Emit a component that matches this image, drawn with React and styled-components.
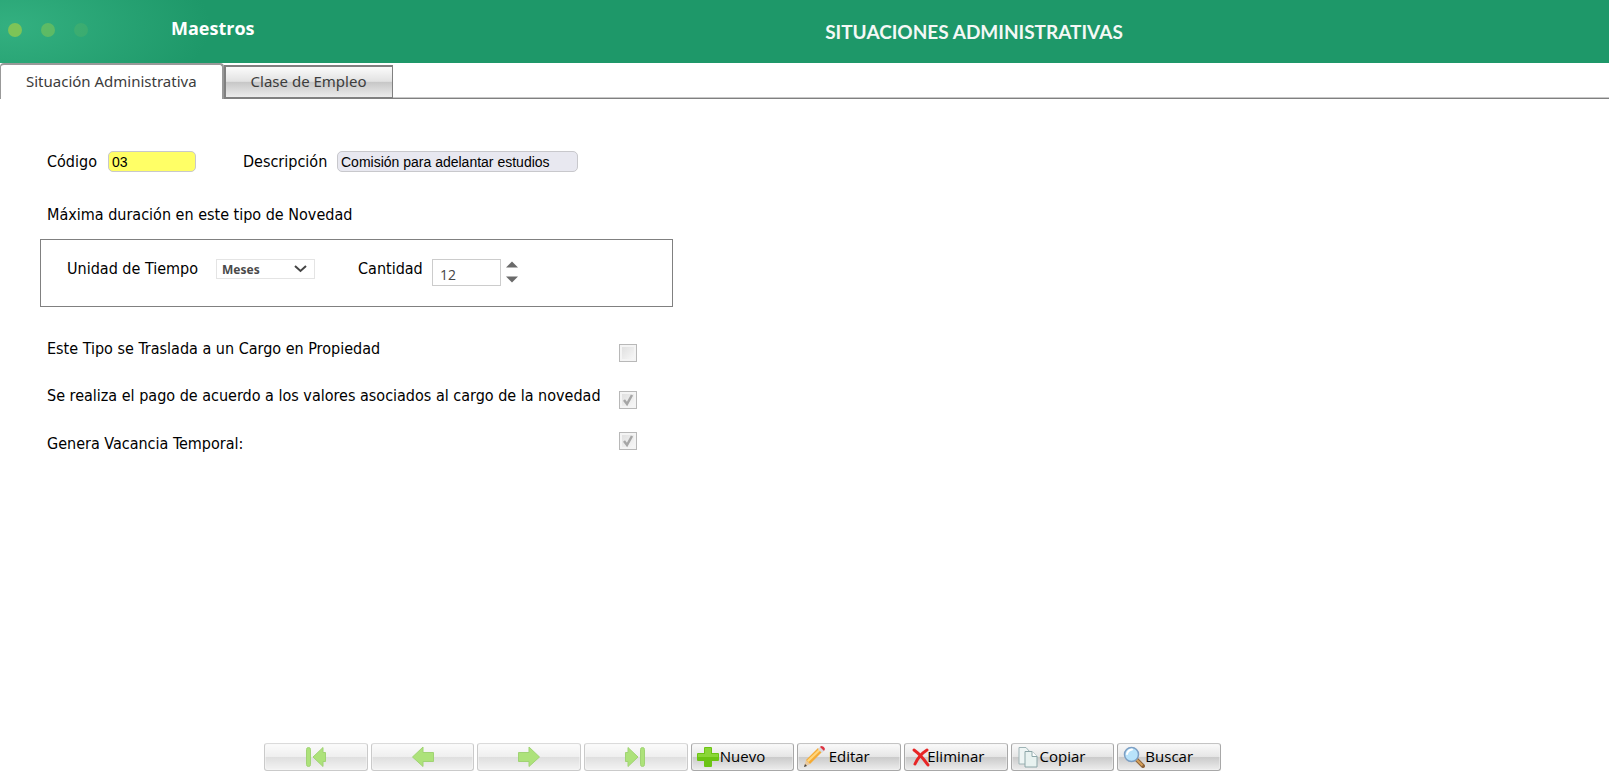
import { useState } from 'react';
import styled, { createGlobalStyle, css } from 'styled-components';

const GlobalStyle = createGlobalStyle`
	* {
		box-sizing: border-box;
	}

	body {
		margin: 0;
		background: #fff;
		color: #000;
		font-family: 'DejaVu Sans Condensed', 'Noto Sans', sans-serif;
		font-size: 16px;
		line-height: 20px;
	}
`;

const Page = styled.div`
	display: flex;
	flex-direction: column;
	min-height: 100vh;
`;

const Header = styled.header`
	display: flex;
	align-items: center;
	height: 63px;
	padding: 0 8px;
	color: #fff;
	background: radial-gradient(ellipse 200px 90px at 10px 26px, #33b080, #1e9869) #1e9869;
`;

const Dots = styled.div`
	display: flex;
	gap: 19px;
	width: 163px;
	margin-bottom: 4px;
`;

const Dot = styled.span`
	width: 14px;
	height: 14px;
	border-radius: 50%;
	background: #7dc457;
	opacity: ${({ $opacity }) => $opacity};
`;

const Brand = styled.strong`
	width: 366px;
	margin-bottom: 8px;
	font-family: 'Open Sans', sans-serif;
	font-size: 18px;
	line-height: 24px;
`;

const Title = styled.h1`
	flex: 1;
	margin: 0;
	padding-right: 190px;
	font-family: Lato, sans-serif;
	font-size: 19px;
	line-height: 24px;
	color: #f4f8f6;
	text-align: center;
`;

const TabList = styled.div`
	display: flex;
	align-items: flex-end;
	height: 36px;
	background: linear-gradient(#c8c8c8, #c8c8c8) 0 34px / 100% 1px no-repeat,
		linear-gradient(#808080, #808080) 0 35px / 100% 1px no-repeat;
`;

const Tab = styled.button`
	height: 34px;
	padding: 0 25px 3px;
	border: 1px solid #808080;
	border-width: 2px 1px 2px 2px;
	background: linear-gradient(#fbfbfb, #e2e2e2 48%, #c6c6c6 50%, #ececec);
	color: #3c3c3c;
	font-family: 'Noto Sans', sans-serif;
	font-size: 15px;

	${({ $active }) =>
		$active &&
		css`
			height: 36px;
			border: 2px solid #999;
			border-bottom: 0;
			border-left-width: 1px;
			border-radius: 4px 4px 0 0;
			background: #fff;
		`}
`;

const Form = styled.form`
	padding: 52px 40px 0;
`;

const FieldRow = styled.div`
	display: grid;
	grid-template-columns: 61px 135px 94px 241px;
	align-items: center;
	padding-left: 7px;
`;

const TextInput = styled.input`
	width: ${({ $width }) => $width};
	height: 21px;
	padding: 0 3px;
	border: 1px solid #c8c8cc;
	border-radius: 5px;
	background: ${({ $fill }) => $fill};
	color: #000;
	font-family: 'Liberation Sans', sans-serif;
	font-size: 14px;
`;

const Group = styled.fieldset`
	margin: 0;
	padding: 0;
	border: 0;
`;

const GroupTitle = styled.legend`
	padding: 33px 7px 14px;
`;

const GroupBox = styled.div`
	display: grid;
	grid-template-columns: 149px 142px 74px auto;
	justify-content: start;
	align-items: start;
	max-width: 633px;
	padding: 19px 26px 20px;
	border: 1px solid #808080;
`;

const SelectBox = styled.div`
	display: grid;
	width: 99px;
	align-items: center;

	& > * {
		grid-area: 1 / 1;
	}

	svg {
		justify-self: end;
		margin-right: 8px;
		pointer-events: none;
	}
`;

const Select = styled.select`
	appearance: none;
	height: 20px;
	padding: 0 5px;
	border: 1px solid #e4e4e4;
	border-radius: 0;
	background: #fff;
	color: #4a4a4a;
	font-family: 'Noto Sans', sans-serif;
	font-size: 12px;
	font-weight: 700;
`;

const Spinner = styled.div`
	display: flex;
	gap: 5px;
`;

const NumberInput = styled.input`
	width: 69px;
	height: 27px;
	padding: 3px 7px 0;
	border: 1px solid #ccc;
	color: #444;
	font-family: 'Open Sans', sans-serif;
	font-size: 14px;
`;

const SpinButtons = styled.div`
	display: flex;
	flex-direction: column;
	gap: 8px;
	padding-top: 2px;
`;

const SpinButton = styled.button`
	display: flex;
	padding: 0;
	border: 0;
	background: none;
`;

const CheckList = styled.div`
	display: grid;
	gap: 23px;
	padding: 31px 0 0 7px;
`;

const CheckRow = styled.div`
	display: grid;
	grid-template-columns: 572px 18px;
	align-items: ${({ $raised }) => ($raised ? 'start' : 'end')};
	height: 24px;

	label {
		align-self: start;
		padding-top: ${({ $raised }) => ($raised ? '2px' : '1px')};
	}
`;

const CheckMark = styled.span`
	display: grid;

	& > * {
		grid-area: 1 / 1;
	}

	svg {
		pointer-events: none;
	}
`;

const Checkbox = styled.input`
	appearance: none;
	width: 18px;
	height: 18px;
	margin: 0;
	border: 1px solid #b8b8b8;
	background: linear-gradient(135deg, #dcdcdc, #fafafa);
	box-shadow: inset 0 0 0 2px #f4f4f4;
`;

const Toolbar = styled.footer`
	display: flex;
	gap: 3px;
	max-width: 1221px;
	margin-top: auto;
	padding: 0 0 3px 264px;
`;

const ToolButton = styled.button`
	display: grid;
	flex: 1;
	align-items: center;
	justify-items: center;
	height: 28px;
	padding: 0 5px;
	border: 1px solid #a8a8a8;
	border-top-color: #c4c4c4;
	border-radius: 3px;
	background: linear-gradient(#fafafa, #e6e6e6 48%, #cbcbcb 52%, #ededed);
	box-shadow: inset 0 0 0 1px #f4f4f480;
	color: #000;
	font-family: 'Open Sans', sans-serif;
	font-size: 15px;
	opacity: ${({ disabled }) => (disabled ? 0.6 : 1)};

	& > * {
		grid-area: 1 / 1;
	}

	svg {
		justify-self: ${({ $iconOnly }) => ($iconOnly ? 'center' : 'start')};
	}

	span {
		padding-bottom: 2px;
	}
`;

const Icon = ({ children, size = 22 }) => (
	<svg width={size} height={size} viewBox="0 0 22 22" fill="none" aria-hidden="true">
		{children}
	</svg>
);

const green = { fill: '#78d022', stroke: '#62b719', strokeLinejoin: 'round' };

const icons = {
	first: (
		<Icon>
			<rect x="1.5" y="1.5" width="4" height="19" rx="2" {...green} />
			<path d="M8 11 18 1.500v5h2.500v9H18v5z" {...green} />
		</Icon>
	),
	prev: (
		<Icon>
			<path d="M.5 11 11 1v5.500h10.500v9H11V20.500z" {...green} />
		</Icon>
	),
	next: (
		<Icon>
			<path d="M21.500 11 11 1v5.500H.5v9H11V20.500z" {...green} />
		</Icon>
	),
	last: (
		<Icon>
			<rect x="15.500" y="1.5" width="4" height="19" rx="2" {...green} />
			<path d="M13 11 3 1.500v5H.5v9H3v5z" {...green} />
		</Icon>
	),
	add: (
		<Icon>
			<path
				d="M8 1h6q1 0 1 1v5h6q1 0 1 1v6q0 1-1 1h-6v5q0 1-1 1H8q-1 0-1-1v-5H1q-1 0-1-1V8q0-1 1-1h6V2q0-1 1-1z"
				fill="#6cc414"
			/>
			<path d="M8 2h6v6h7v3H1V8h7z" fill="#8ad638" />
		</Icon>
	),
	edit: (
		<Icon>
			<path d="m1 21 2-7 4 4z" fill="#e8c9a0" />
			<path d="m1 21 1-3 2 2z" fill="#444" />
			<path d="M3 14 15 2l4 4L7 18z" fill="#f5ab35" />
			<path d="M4 14.500 16 3l1.500 1.500L5.500 16z" fill="#ffd67c" />
			<path d="m15 3 2-2 4 4-2 2z" fill="#d9dbe0" />
			<path d="m17 1 1-1q3 0 4 3l-1 2z" fill="#dd3340" />
		</Icon>
	),
	remove: (
		<Icon>
			<path
				d="M4 4q7 5 14 15M17 4Q9 9 5 18"
				stroke="#e72525"
				strokeWidth="3"
				strokeLinecap="round"
			/>
		</Icon>
	),
	copy: (
		<Icon>
			<path d="M2 1.500h7L13 6v12H2z" fill="#eef5f4" stroke="#9fb4b6" />
			<path d="M8 5.500h7l5 5v10.500H8z" fill="#e8f2f0" stroke="#8ca6a8" />
			<path d="M15 5.500v5h5" fill="#fff" stroke="#8ca6a8" />
		</Icon>
	),
	search: (
		<Icon>
			<path d="m13 13 7 7" stroke="#8c6239" strokeWidth="4" strokeLinecap="round" />
			<path d="m13 13 6.500 6.500" stroke="#d6a15a" strokeWidth="2" />
			<circle cx="8.500" cy="8.500" r="7" fill="#b9e3fa" stroke="#7c9fc4" strokeWidth="1.500" />
			<path d="M4 8q1-4 5-4.500" stroke="#fff" strokeWidth="2" strokeLinecap="round" />
		</Icon>
	),
};

const tabs = ['Situación Administrativa', 'Clase de Empleo'];

const checks = [
	{ id: 'traslada', label: 'Este Tipo se Traslada a un Cargo en Propiedad', checked: false },
	{
		id: 'pago',
		label: 'Se realiza el pago de acuerdo a los valores asociados al cargo de la novedad',
		checked: true,
	},
	{ id: 'vacancia', label: 'Genera Vacancia Temporal:', checked: true, raised: true },
];

const navigation = [
	{ icon: 'first', label: 'Primero' },
	{ icon: 'prev', label: 'Anterior' },
	{ icon: 'next', label: 'Siguiente' },
	{ icon: 'last', label: 'Último' },
];

const actions = [
	{ icon: 'add', label: 'Nuevo' },
	{ icon: 'edit', label: 'Editar' },
	{ icon: 'remove', label: 'Eliminar' },
	{ icon: 'copy', label: 'Copiar' },
	{ icon: 'search', label: 'Buscar' },
];

export default function App() {
	const [activeTab, setActiveTab] = useState(0);
	const [amount, setAmount] = useState(12);

	const renderTabs = () => {
		return tabs.map((tab, index) => (
			<Tab
				key={tab}
				type="button"
				role="tab"
				aria-selected={index === activeTab}
				$active={index === activeTab}
				onClick={() => setActiveTab(index)}
			>
				{tab}
			</Tab>
		));
	};

	const renderChecks = () => {
		return checks.map(({ id, label, checked, raised }) => (
			<CheckRow key={id} $raised={raised}>
				<label htmlFor={id}>{label}</label>
				<CheckMark>
					<Checkbox id={id} type="checkbox" defaultChecked={checked} disabled />
					{checked && (
						<svg width="18" height="18" viewBox="0 0 18 18" fill="none" aria-hidden="true">
							<path d="m5 9 3 4 5-9" stroke="#a6a6a6" strokeWidth="2.500" />
						</svg>
					)}
				</CheckMark>
			</CheckRow>
		));
	};

	return (
		<Page>
			<GlobalStyle />
			<Header>
				<Dots>
					<Dot $opacity={1} />
					<Dot $opacity={0.6} />
					<Dot $opacity={0.2} />
				</Dots>
				<Brand>Maestros</Brand>
				<Title>SITUACIONES ADMINISTRATIVAS</Title>
			</Header>
			<TabList role="tablist">{renderTabs()}</TabList>
			<Form>
				<FieldRow>
					<label htmlFor="codigo">Código</label>
					<TextInput id="codigo" $width="88px" $fill="#ffff66" defaultValue="03" />
					<label htmlFor="descripcion">Descripción</label>
					<TextInput
						id="descripcion"
						$width="241px"
						$fill="#e8e8f0"
						defaultValue="Comisión para adelantar estudios"
					/>
				</FieldRow>
				<Group>
					<GroupTitle>Máxima duración en este tipo de Novedad</GroupTitle>
					<GroupBox>
						<label htmlFor="unidad">Unidad de Tiempo</label>
						<SelectBox>
							<Select id="unidad" defaultValue="Meses">
								<option>Meses</option>
							</Select>
							<svg width="13" height="8" viewBox="0 0 13 8" fill="none" aria-hidden="true">
								<path d="m1 1 5.500 5L12 1" stroke="#444" strokeWidth="2" />
							</svg>
						</SelectBox>
						<label htmlFor="cantidad">Cantidad</label>
						<Spinner>
							<NumberInput
								id="cantidad"
								value={amount}
								onChange={(e) => setAmount(Number(e.target.value) || 0)}
							/>
							<SpinButtons>
								<SpinButton type="button" aria-label="Aumentar" onClick={() => setAmount(amount + 1)}>
									<svg width="12" height="7" viewBox="0 0 12 7" aria-hidden="true">
										<path d="M0 6.500 6 .5l6 6z" fill="#6a6a6a" />
									</svg>
								</SpinButton>
								<SpinButton type="button" aria-label="Disminuir" onClick={() => setAmount(amount - 1)}>
									<svg width="12" height="7" viewBox="0 0 12 7" aria-hidden="true">
										<path d="M0 .5 6 6.500l6-6z" fill="#6a6a6a" />
									</svg>
								</SpinButton>
							</SpinButtons>
						</Spinner>
					</GroupBox>
				</Group>
				<CheckList>{renderChecks()}</CheckList>
			</Form>
			<Toolbar>
				{navigation.map(({ icon, label }) => (
					<ToolButton key={icon} type="button" aria-label={label} $iconOnly disabled>
						{icons[icon]}
					</ToolButton>
				))}
				{actions.map(({ icon, label }) => (
					<ToolButton key={icon} type="button">
						{icons[icon]}
						<span>{label}</span>
					</ToolButton>
				))}
			</Toolbar>
		</Page>
	);
}
